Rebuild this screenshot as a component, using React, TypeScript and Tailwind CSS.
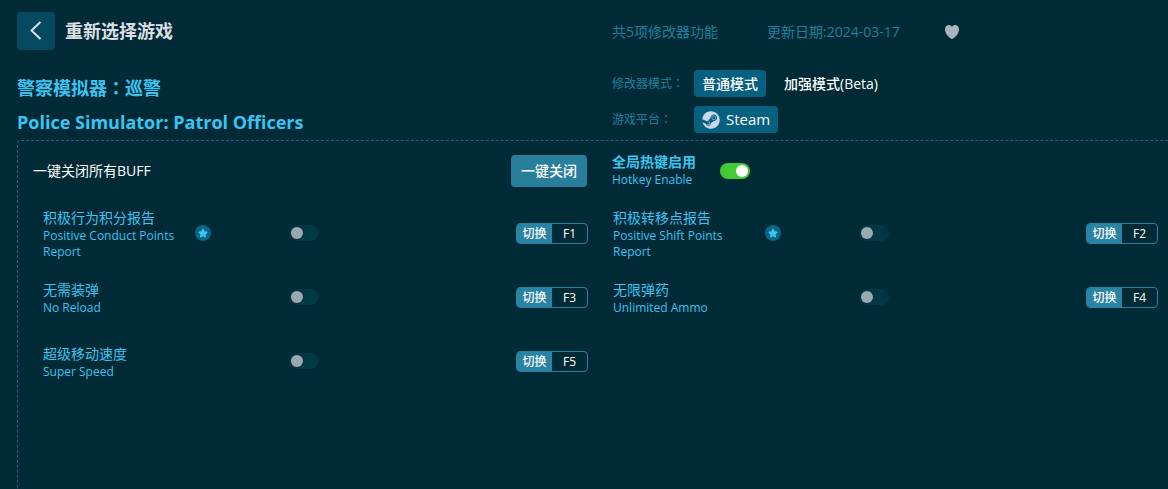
import { useState } from 'react';
import type { FC } from 'react';
import { FaStar, FaSteam } from 'react-icons/fa';

interface Cheat {
  id: string;
  name: string;
  enName: string;
  hotkey: string;
  starred?: boolean;
}

const cheats: Cheat[] = [
  { id: 'conduct', name: '积极行为积分报告', enName: 'Positive Conduct Points Report', hotkey: 'F1', starred: true },
  { id: 'shift', name: '积极转移点报告', enName: 'Positive Shift Points Report', hotkey: 'F2', starred: true },
  { id: 'reload', name: '无需装弹', enName: 'No Reload', hotkey: 'F3' },
  { id: 'ammo', name: '无限弹药', enName: 'Unlimited Ammo', hotkey: 'F4' },
  { id: 'speed', name: '超级移动速度', enName: 'Super Speed', hotkey: 'F5' },
];

// The TC face centres the full-width colon in its box
const Colon: FC = () => <span className="font-['Noto_Sans_CJK_TC',sans-serif]">：</span>;

interface SwitchProps {
  id: string;
  checked: boolean;
  onChange: () => void;
}

const Switch: FC<SwitchProps> = ({ id, checked, onChange }) => (
  <input
    id={id}
    type="checkbox"
    checked={checked}
    onChange={onChange}
    className="flex h-4 w-[30px] shrink-0 cursor-pointer appearance-none items-center rounded-full bg-[#003846] px-0.5 before:size-3 before:rounded-full before:bg-[#9aa9ae] before:content-[''] checked:justify-end checked:bg-[#43cb37] checked:before:bg-white"
  />
);

interface CheatRowProps {
  cheat: Cheat;
  active: boolean;
  onToggle: () => void;
}

const CheatRow: FC<CheatRowProps> = ({ cheat, active, onToggle }) => (
  <div className="flex min-h-16 items-center">
    <div className="flex w-[246px] shrink-0 items-center">
      <label htmlFor={cheat.id} className="w-[152px] pr-3 text-xs leading-4">
        <span className="mb-0.5 block text-sm leading-4">{cheat.name}</span>
        {cheat.enName}
      </label>
      {cheat.starred && (
        <span className="mb-1 flex size-4 items-center justify-center rounded-full bg-[#066684]">
          <FaStar size={10} />
        </span>
      )}
    </div>
    <div className="mb-1 flex flex-1 items-center justify-between">
      <Switch id={cheat.id} checked={active} onChange={onToggle} />
      <button
        type="button"
        onClick={onToggle}
        className="flex h-[21px] w-[72px] overflow-hidden rounded border border-[#2983a3] text-xs leading-[19px] text-white"
      >
        <span className="w-[35px] bg-[#2983a3] font-medium">切换</span>
        <span className="flex-1">{cheat.hotkey}</span>
      </button>
    </div>
  </div>
);

const App: FC = () => {
  const [hotkeys, setHotkeys] = useState(true);
  const [active, setActive] = useState<string[]>([]);

  const toggle = (id: string) =>
    setActive((prev) => (prev.includes(id) ? prev.filter((x) => x !== id) : [...prev, id]));

  return (
    <div className="flex min-h-screen flex-col bg-[#002a35] pl-[17px] pt-3 font-['Open_Sans','Noto_Sans_CJK_SC',sans-serif] text-[#3ac4f2]">
      <header className="grid grid-cols-2 gap-x-[49px] pr-2.5 pb-px">
        <div>
          <button
            type="button"
            className="flex items-center gap-2.5 text-lg leading-[38px] font-bold text-[#dcdfe1]"
          >
            <span className="flex size-[38px] items-center justify-center rounded bg-[#04495f]">
              <svg width="12" height="20" viewBox="0 0 12 20" fill="none" stroke="currentColor" strokeWidth="2">
                <path d="M10.5 1 1.5 9.5l9 8.5" />
              </svg>
            </span>
            重新选择游戏
          </button>
          <h1 className="mt-5 text-lg leading-[34px] font-bold">
            警察模拟器
            <Colon />
            巡警
          </h1>
          <h2 className="text-lg leading-[34px] font-bold">Police Simulator: Patrol Officers</h2>
        </div>

        <div>
          <div className="flex h-10 items-center text-sm text-[#1f819f]">
            <span className="w-[155px]">共5项修改器功能</span>
            <span className="w-[178px]">更新日期:2024-03-17</span>
            <button type="button" aria-label="收藏" className="text-[#a7b5be]">
              <svg width="14" height="14" viewBox="0 0 14 14" fill="currentColor">
                <path d="M7 1.7C6.2.6 5.1 0 3.9 0 1.7 0 0 1.8 0 4.4c0 3.4 2.6 7 6.3 9.3.5.3.9.3 1.4 0C11.4 11.4 14 7.8 14 4.4 14 1.8 12.3 0 10.1 0 8.9 0 7.8.6 7 1.7z" />
              </svg>
            </button>
          </div>
          <div className="mt-[18px] flex h-[27px] items-center text-sm text-white">
            <span className="w-[82px] text-xs text-[#1f819f]">
              修改器模式
              <Colon />
            </span>
            <button type="button" className="h-[27px] rounded bg-[#066080] px-2 font-medium">
              普通模式
            </button>
            <button type="button" className="h-[27px] px-[18px] font-medium">
              加强模式(Beta)
            </button>
          </div>
          <div className="mt-[9px] flex h-[27px] items-center text-sm text-white">
            <span className="w-[82px] text-xs text-[#1f819f]">
              游戏平台
              <Colon />
            </span>
            <button type="button" className="flex h-[27px] items-center gap-1.5 rounded bg-[#066080] px-2 text-[15px] font-medium">
              <FaSteam size={18} className="text-[#c9d7ea]" />
              Steam
            </button>
          </div>
        </div>
      </header>

      <main className="flex-1 rounded-tl border-t border-l border-dashed border-[#0f6c88]">
        <div className="grid grid-cols-2 gap-x-[25px] pt-3.5 pr-0.5 pl-[15px]">
          <div className="flex h-8 items-center justify-between text-sm text-white">
            <span>一键关闭所有BUFF</span>
            <button
              type="button"
              onClick={() => setActive([])}
              className="h-8 rounded bg-[#277f9c] px-2.5 font-medium"
            >
              一键关闭
            </button>
          </div>
          <div className="flex h-8 items-center">
            <label htmlFor="hotkeys" className="w-[108px] text-xs leading-[18px]">
              <span className="block text-sm leading-[18px] font-bold">全局热键启用</span>
              Hotkey Enable
            </label>
            <Switch id="hotkeys" checked={hotkeys} onChange={() => setHotkeys(!hotkeys)} />
          </div>
        </div>

        <div className="grid grid-cols-2 gap-x-[25px] pt-4 pr-2.5 pl-[25px]">
          {cheats.map((cheat) => (
            <CheatRow
              key={cheat.id}
              cheat={cheat}
              active={active.includes(cheat.id)}
              onToggle={() => toggle(cheat.id)}
            />
          ))}
        </div>
      </main>
    </div>
  );
};

export default App;
